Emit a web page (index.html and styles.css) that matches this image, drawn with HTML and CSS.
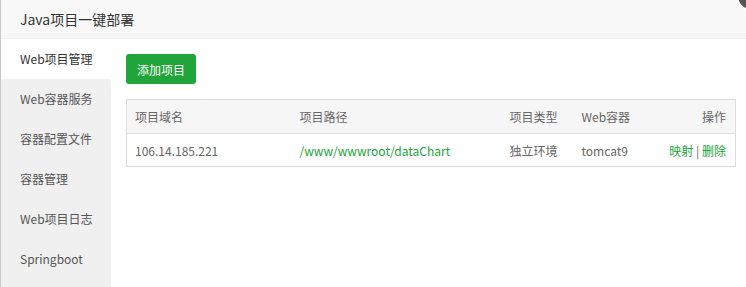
FILE: index.html
```html
<!DOCTYPE html>
<html lang="zh">
<head>
<meta charset="utf-8">
<link rel="stylesheet" href="styles.css">
</head>
<body>
<div class="layer">
  <div class="title">Java项目一键部署</div>
  <span class="close"></span>
  <div class="main">
    <ul class="menu">
      <li class="active">Web项目管理</li>
      <li>Web容器服务</li>
      <li>容器配置文件</li>
      <li>容器管理</li>
      <li>Web项目日志</li>
      <li>Springboot</li>
    </ul>
    <div class="content">
      <button class="btn">添加项目</button>
      <table class="grid">
        <colgroup>
          <col class="c1"><col class="c2"><col class="c3"><col class="c4"><col>
        </colgroup>
        <thead>
          <tr><th>项目域名</th><th>项目路径</th><th>项目类型</th><th>Web容器</th><th class="r">操作</th></tr>
        </thead>
        <tbody>
          <tr>
            <td>106.14.185.221</td>
            <td><a class="link">/www/wwwroot/dataChart</a></td>
            <td>独立环境</td>
            <td>tomcat9</td>
            <td class="r"><a class="link">映射</a> | <a class="link">删除</a></td>
          </tr>
        </tbody>
      </table>
    </div>
  </div>
</div>
</body>
</html>
```
FILE: styles.css
```css
* { box-sizing: border-box; }
html, body { margin: 0; padding: 0; }
body {
  width: 746px;
  height: 287px;
  overflow: hidden;
  background: #fff;
  font-family: "Noto Sans CJK SC", "Noto Sans", sans-serif;
  color: #555;
}
.layer { position: relative; height: 287px; border-left: 1px solid #c8c8c8; }
.title {
  height: 39px;
  line-height: 38px;
  padding-left: 19px;
  font-size: 14px;
  color: #333;
  background: #f8f8f8;
  border-bottom: 1px solid #eee;
}
.close {
  position: absolute;
  left: 735px;
  top: -19px;
  width: 30px;
  height: 30px;
  border-radius: 50%;
  background: #555;
  border: 2px solid #fff;
}
.main { display: flex; height: 248px; }
.menu {
  list-style: none;
  margin: 0;
  padding: 0;
  width: 110px;
  background: #f0f0f0;
  font-size: 12px;
  color: #555;
}
.menu li { height: 40px; line-height: 40px; padding-left: 19px; }
.menu li.active { background: #fff; color: #333; }
.content { flex: 1; padding: 15px 10px 0 15px; }
.btn {
  display: block;
  height: 30px;
  width: 70px;
  padding: 0;
  border: 0;
  border-radius: 3px;
  background: #20a53a;
  color: #fff;
  font-family: inherit;
  font-size: 12px;
}
.grid {
  margin-top: 15px;
  width: 610px;
  border-collapse: collapse;
  table-layout: fixed;
  font-size: 12px;
  border: 1px solid #ddd;
}
.c1 { width: 165px; }
.c2 { width: 210px; }
.c3 { width: 72px; }
.c4 { width: 80px; }
.grid th {
  height: 34px;
  background: #f6f6f6;
  font-weight: normal;
  color: #666;
  text-align: left;
  padding: 0 8px;
  border-bottom: 1px solid #ddd;
}
.grid td { height: 33px; padding: 0 8px; color: #666; white-space: nowrap; }
.grid .r { text-align: right; padding-right: 9px; }
.link { color: #20a53a; }
```
